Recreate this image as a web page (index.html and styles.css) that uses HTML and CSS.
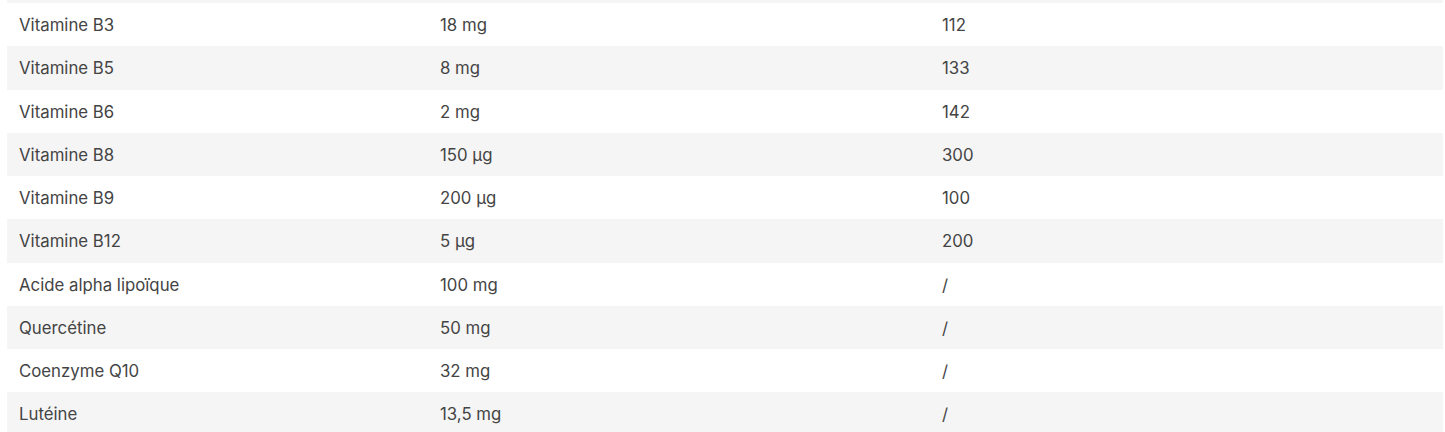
FILE: index.html
```html
<!DOCTYPE html>
<html lang="fr">
<head>
    <meta charset="UTF-8">
    <meta name="viewport" content="width=device-width, initial-scale=1.0">
    <title>Composition</title>
    <link rel="stylesheet" href="styles.css">
</head>
<body>
    <table class="nutrition-table">
        <colgroup>
            <col class="col-name">
            <col class="col-amount">
            <col class="col-vnr">
        </colgroup>
        <tbody>
            <tr class="cut-row"><td></td><td></td><td></td></tr>
            <tr><td>Vitamine B3</td><td>18 mg</td><td>112</td></tr>
            <tr><td>Vitamine B5</td><td>8 mg</td><td>133</td></tr>
            <tr><td>Vitamine B6</td><td>2 mg</td><td>142</td></tr>
            <tr><td>Vitamine B8</td><td>150 µg</td><td>300</td></tr>
            <tr><td>Vitamine B9</td><td>200 µg</td><td>100</td></tr>
            <tr><td>Vitamine B12</td><td>5 µg</td><td>200</td></tr>
            <tr><td>Acide alpha lipoïque</td><td>100 mg</td><td>/</td></tr>
            <tr><td>Quercétine</td><td>50 mg</td><td>/</td></tr>
            <tr><td>Coenzyme Q10</td><td>32 mg</td><td>/</td></tr>
            <tr><td>Lutéine</td><td>13,5 mg</td><td>/</td></tr>
        </tbody>
    </table>
</body>
</html>
```

FILE: styles.css
```css
body {
    font-family: Inter, "Noto Sans", sans-serif;
    margin: 0;
    padding: 0 2px 0 7px;
    background-color: #fff;
    overflow: hidden;
}

.nutrition-table {
    width: 1436px;
    border-collapse: collapse;
    table-layout: fixed;
    color: #444;
    font-size: 16.8px;
}

.col-name {
    width: 421px;
}

.col-amount {
    width: 502px;
}

.nutrition-table td {
    padding: 12px 12px 11.25px;
    line-height: 20px;
    text-align: left;
}

.nutrition-table tr:nth-child(odd) {
    background-color: #f5f5f5;
}

.nutrition-table .cut-row td {
    padding: 0;
    height: 3px;
    line-height: 3px;
}
```
